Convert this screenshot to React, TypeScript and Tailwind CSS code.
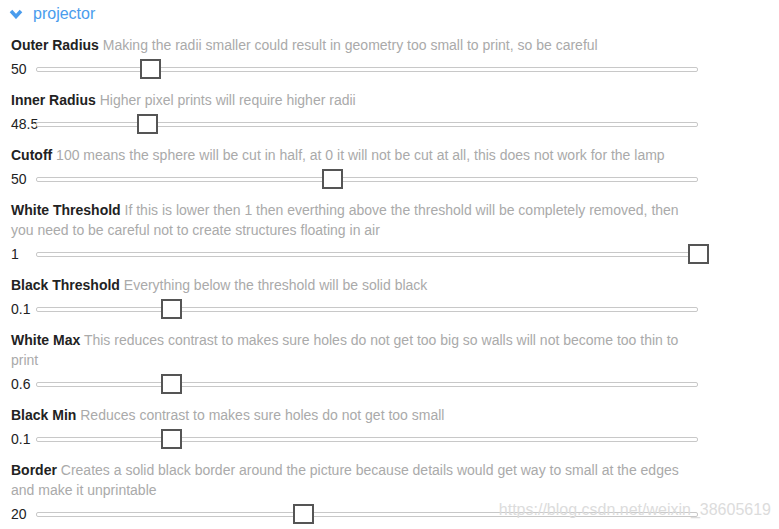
const rows: { label: string; desc: string; value: string; pct: number }[] = [
  {
    label: "Outer Radius",
    desc: "Making the radii smaller could result in geometry too small to print, so be careful",
    value: "50",
    pct: 16.9,
  },
  { label: "Inner Radius", desc: "Higher pixel prints will require higher radii", value: "48.5", pct: 16.5 },
  {
    label: "Cutoff",
    desc: "100 means the sphere will be cut in half, at 0 it will not be cut at all, this does not work for the lamp",
    value: "50",
    pct: 44.6,
  },
  {
    label: "White Threshold",
    desc: "If this is lower then 1 then everthing above the threshold will be completely removed, then you need to be careful not to create structures floating in air",
    value: "1",
    pct: 100,
  },
  { label: "Black Threshold", desc: "Everything below the threshold will be solid black", value: "0.1", pct: 20.1 },
  {
    label: "White Max",
    desc: "This reduces contrast to makes sure holes do not get too big so walls will not become too thin to print",
    value: "0.6",
    pct: 20.1,
  },
  { label: "Black Min", desc: "Reduces contrast to makes sure holes do not get too small", value: "0.1", pct: 20.1 },
  {
    label: "Border",
    desc: "Creates a solid black border around the picture because details would get way to small at the edges and make it unprintable",
    value: "20",
    pct: 40.2,
  },
];

function SliderRow({ label, desc, value, pct }: (typeof rows)[number]) {
  return (
    <div className="mb-[11px]">
      <p className="leading-[20px]">
        <span className="font-bold text-[#222]">{label}</span>{" "}
        <span className="text-[#aaa]">{desc}</span>
      </p>
      <div className="mt-[4px] h-[20px] flex items-center">
        <span className="w-[25px] shrink-0 whitespace-nowrap text-[#222] leading-[20px]">{value}</span>
        <div className="flex-1 relative h-[5px] border border-[#c8c8c8] rounded-[2px] bg-white">
          {/* handle */}
          <div
            className="absolute top-1/2 -translate-y-1/2 w-[21px] h-[20px] border-2 border-[#555] bg-white"
            style={{ left: `calc(${pct}% - 9px)` }}
          />
        </div>
      </div>
    </div>
  );
}

export default function App() {
  return (
    <div className="relative w-[779px] h-[529px] overflow-hidden bg-white font-['Liberation_Sans',Arial,sans-serif] text-[14px]">
      <div className="flex items-center h-[28px] pl-[9px] gap-[10px] text-[#4a9ced] text-[16px]">
        <svg width="14" height="10" viewBox="0 0 14 10">
          <path d="M2 2 L7 7.5 L12 2" fill="none" stroke="#4a9ced" strokeWidth="3.5" />
        </svg>
        <span>projector</span>
      </div>
      <div className="mt-[7px] pl-[11px] pr-[81px]">
        {rows.map((r) => (
          <SliderRow key={r.label} {...r} />
        ))}
      </div>
      <span className="absolute right-[8px] top-[500px] text-[16px] text-[#dcdcdc] leading-[20px]">
        https://blog.csdn.net/weixin_38605619
      </span>
    </div>
  );
}
